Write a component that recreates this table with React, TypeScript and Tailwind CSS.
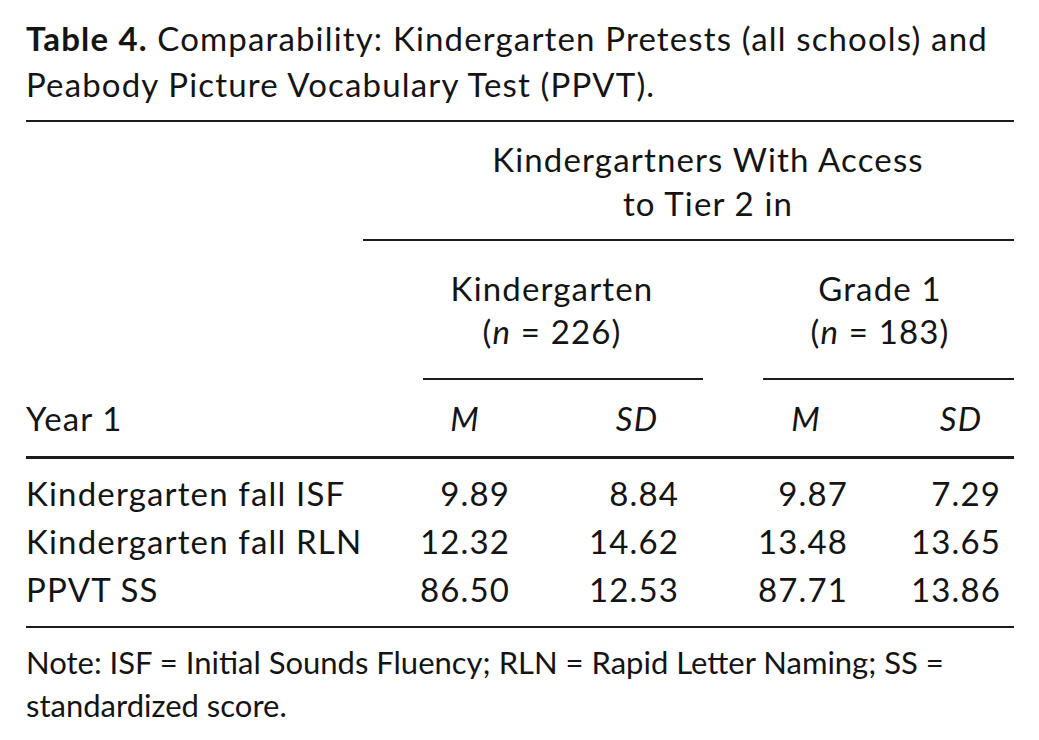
import React from 'react';

const rows = [
  { label: 'Kindergarten fall ISF', values: ['9.89', '8.84', '9.87', '7.29'] },
  { label: 'Kindergarten fall RLN', values: ['12.32', '14.62', '13.48', '13.65'] },
  { label: 'PPVT SS', values: ['86.50', '12.53', '87.71', '13.86'] },
];

const Rule = ({ className = '' }: { className?: string }) => (
  <div className={`h-[2px] bg-[#1c1c1c] ${className}`} />
);

export default function App() {
  return (
    <div
      className="w-[1039px] h-[740px] bg-white text-[#141414] pl-[26px] pt-[15px] text-[33px] tracking-[0.035em]"
      style={{ fontFamily: 'Lato, "Open Sans", sans-serif' }}
    >
      <div className="w-[988px]">
        {/* caption */}
        <p className="leading-[46px] whitespace-nowrap">
          <span className="font-bold">Table 4.</span> Comparability: Kindergarten Pretests (all schools) and
          <br />
          Peabody Picture Vocabulary Test (PPVT).
        </p>

        <Rule className="mt-[13px]" />

        {/* spanning header */}
        <div className="flex h-[117px] flex-col justify-center">
          <div className="ml-[376px] w-[612px] text-center leading-[44px]">
            Kindergartners With Access
            <br />
            to Tier 2 in
          </div>
        </div>
        <Rule className="ml-[337px]" />

        {/* group headers */}
        <div className="flex h-[137px] items-center">
          <div className="ml-[394px] w-[264px] text-center leading-[43px]">
            Kindergarten
            <br />(<i>n</i> = 226)
          </div>
          <div className="ml-[62px] w-[268px] text-center leading-[43px]">
            Grade 1
            <br />(<i>n</i> = 183)
          </div>
        </div>
        <div className="flex">
          <Rule className="ml-[397px] w-[280px]" />
          <Rule className="ml-[60px] w-[251px]" />
        </div>

        {/* stat headers */}
        <div className="flex h-[76px] items-center leading-[40px]">
          <div className="w-[394px]">Year 1</div>
          <div className="w-[90px] text-center italic">M</div>
          <div className="ml-[85px] w-[84px] text-center italic">SD</div>
          <div className="ml-[85px] w-[84px] text-center italic">M</div>
          <div className="ml-[73px] w-[80px] text-center italic">SD</div>
        </div>
        <Rule className="h-[3px]" />

        {/* body */}
        <div className="pt-[10px] pb-[13px]">
          {rows.map((row) => (
            <div key={row.label} className="flex h-[48px] items-center leading-[48px]">
              <div className="w-[394px]">{row.label}</div>
              <div className="flex w-[90px] justify-end">{row.values[0]}</div>
              <div className="ml-[85px] flex w-[84px] justify-end">{row.values[1]}</div>
              <div className="ml-[85px] flex w-[84px] justify-end">{row.values[2]}</div>
              <div className="ml-[73px] flex w-[80px] justify-end">{row.values[3]}</div>
            </div>
          ))}
        </div>
        <Rule />

        {/* note */}
        <p className="mt-[13px] text-[31px] leading-[43px] tracking-normal whitespace-nowrap">
          Note: ISF = Initial Sounds Fluency; RLN = Rapid Letter Naming; SS =
          <br />
          standardized score.
        </p>
      </div>
    </div>
  );
}
